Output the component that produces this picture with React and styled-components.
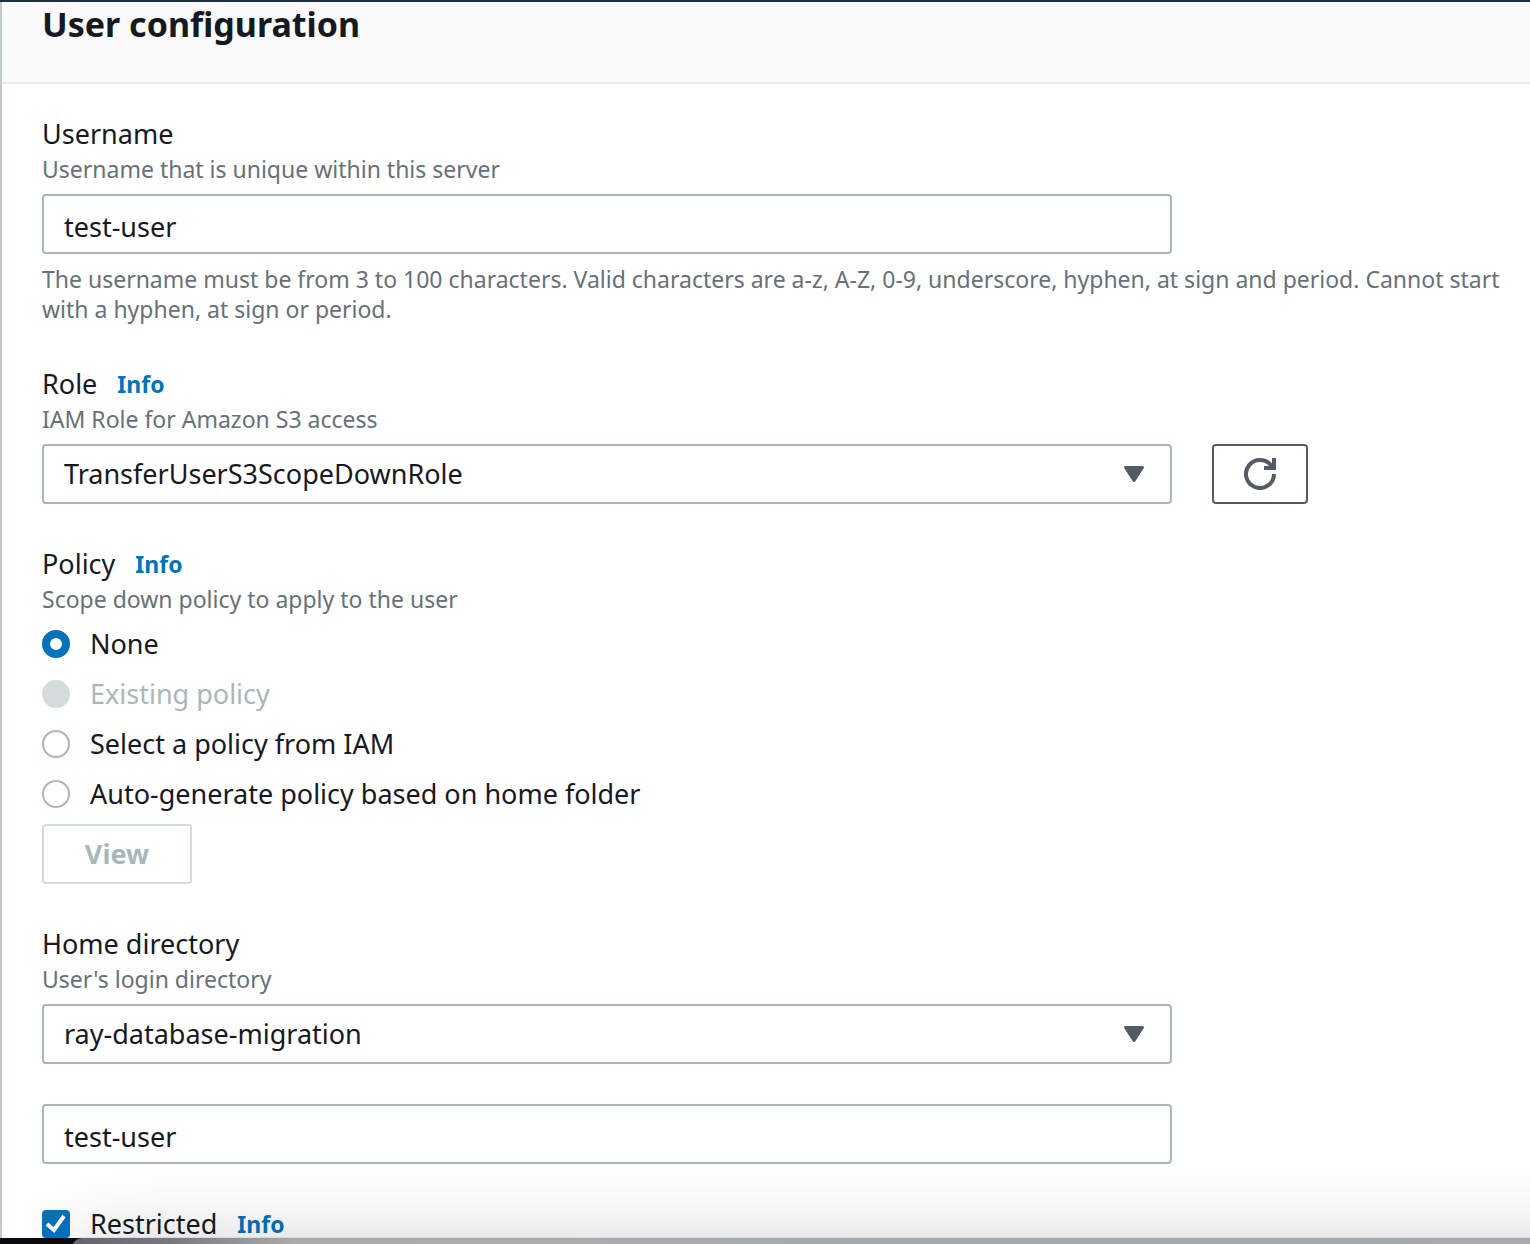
import React, { useState } from "react";
import styled, { createGlobalStyle } from "styled-components";

const color = {
  text: "#16191f",
  muted: "#687078",
  link: "#0073bb",
  border: "#aab7b8",
  disabled: "#d5dbdb",
  icon: "#545b64",
};

const GlobalStyle = createGlobalStyle`
  *, *::before, *::after { box-sizing: border-box; }
  body {
    margin: 0;
    background: #fff;
    color: ${color.text};
    font-family: "Noto Sans", "Open Sans", sans-serif;
    font-size: 27px;
    line-height: 40px;
  }
`;

const Panel = styled.main`
  border-top: 2px solid #232f3e;
`;

const PanelInner = styled.div`
  border-left: 2px solid #c3c9c9;
`;

const Header = styled.header`
  padding: 0 40px 36px;
  background: #fafafa;
  border-bottom: 2px solid #eaeded;
`;

const Title = styled.h2`
  margin: 0;
  font-size: 34px;
  line-height: 44px;
  font-weight: 700;
`;

const Form = styled.form`
  display: flex;
  flex-direction: column;
  gap: 40px;
  padding: 30px 16px 0 40px;
`;

const Field = styled.div`
  display: flex;
  flex-direction: column;
  gap: 10px;
`;

const FieldSet = styled.fieldset`
  display: flex;
  flex-direction: column;
  gap: 10px;
  min-width: 0;
  margin: 0;
  padding: 0;
  border: 0;
`;

const LabelRow = styled.div`
  display: flex;
  align-items: center;
  gap: 20px;
`;

const Hint = styled.div`
  color: ${color.muted};
  font-size: 23px;
  line-height: 30px;
`;

const InfoLink = styled.a`
  color: ${color.link};
  font-size: 23px;
  font-weight: 700;
  text-decoration: none;
`;

const ControlRow = styled.div`
  display: grid;
  grid-template-columns: minmax(0, 1130px) auto;
  justify-content: start;
  gap: 40px;
`;

const TextInput = styled.input`
  width: 100%;
  max-width: 1130px;
  height: 60px;
  padding: 4px 20px 0;
  border: 2px solid ${color.border};
  border-radius: 4px;
  background: #fff;
  color: inherit;
  font: inherit;
`;

const SelectBox = styled.div`
  display: grid;
  align-items: center;
  max-width: 1130px;

  > * {
    grid-area: 1 / 1;
  }

  > svg {
    justify-self: end;
    margin-right: 28px;
    pointer-events: none;
  }
`;

const NativeSelect = styled.select`
  appearance: none;
  width: 100%;
  height: 60px;
  padding: 0 60px 0 20px;
  border: 2px solid ${color.border};
  border-radius: 4px;
  background: #fff;
  color: inherit;
  font: inherit;
`;

const Button = styled.button`
  display: inline-flex;
  align-items: center;
  justify-content: center;
  align-self: flex-start;
  height: 60px;
  min-width: ${(p) => (p.$icon ? "96px" : "150px")};
  padding: 0;
  border: 2px solid ${color.icon};
  border-radius: 4px;
  background: #fff;
  color: ${color.icon};
  font: inherit;
  font-weight: 700;

  &:disabled {
    border-color: ${color.disabled};
    color: ${color.border};
  }
`;

const Choice = styled.label`
  display: flex;
  align-items: center;
  gap: 20px;
  color: ${(p) => (p.$disabled ? color.border : "inherit")};
`;

const Radio = styled.input`
  appearance: none;
  flex: none;
  width: 28px;
  height: 28px;
  margin: 0;
  border: 2px solid ${color.border};
  border-radius: 50%;
  background: #fff;

  &:checked {
    border: 8px solid ${color.link};
  }

  &:disabled {
    border-color: ${color.disabled};
    background: ${color.disabled};
  }
`;

const CheckWrap = styled.span`
  display: grid;
  flex: none;

  > * {
    grid-area: 1 / 1;
  }

  > svg {
    pointer-events: none;
  }
`;

const Checkbox = styled.input`
  appearance: none;
  width: 28px;
  height: 28px;
  margin: 0;
  border: 2px solid ${color.border};
  border-radius: 4px;
  background: #fff;

  &:checked {
    border-color: ${color.link};
    background: ${color.link};
  }
`;

const DesktopEdge = styled.div`
  position: fixed;
  inset: auto 0 0 0;
  height: 100px;
  overflow: hidden;
  pointer-events: none;

  &::before {
    content: "";
    position: absolute;
    inset: auto 0 0 0;
    height: 6px;
    background: #0b0b0d;
  }

  &::after {
    content: "";
    position: absolute;
    top: 94px;
    left: 72px;
    right: -100px;
    height: 200px;
    border-top-left-radius: 10px;
    background: linear-gradient(90deg, #62656f 0, #77797f 100px, #a9a9a9 220px, #a9abab 480px, #a3a9ac 800px, #a3a9ac 1300px, #a9a9ab 1400px);
    box-shadow: 0 0 2px rgba(0, 0, 0, 0.25), 0 0 80px rgba(0, 0, 0, 0.17);
  }
`;

function Caret() {
  return (
    <svg width="20" height="16" viewBox="0 0 20 16" aria-hidden="true">
      <path d="M1.5 1.5h17L10 14.5z" fill={color.icon} stroke={color.icon} strokeWidth="3" strokeLinejoin="round" />
    </svg>
  );
}

function RefreshIcon() {
  return (
    <svg width="32" height="32" viewBox="0 0 32 32" fill="none" stroke="currentColor" strokeWidth="4" aria-hidden="true">
      <path d="M30 16A14 14 0 1 1 28 8.8" />
      <path d="M30 0v10H20" />
    </svg>
  );
}

function CheckMark() {
  return (
    <svg width="28" height="28" viewBox="0 0 28 28" fill="none" stroke="#fff" strokeWidth="4" aria-hidden="true">
      <path d="M5 14l7 6L22 6" />
    </svg>
  );
}

function Select({ id, value }) {
  return (
    <SelectBox>
      <NativeSelect id={id} defaultValue={value}>
        <option>{value}</option>
      </NativeSelect>
      <Caret />
    </SelectBox>
  );
}

function FieldLabel({ htmlFor, text, hint, info }) {
  return (
    <div>
      <LabelRow>
        {htmlFor ? <label htmlFor={htmlFor}>{text}</label> : <span id="policy-label">{text}</span>}
        {info && <InfoLink href="#info">Info</InfoLink>}
      </LabelRow>
      <Hint>{hint}</Hint>
    </div>
  );
}

const policies = [
  { value: "none", label: "None" },
  { value: "existing", label: "Existing policy", disabled: true },
  { value: "iam", label: "Select a policy from IAM" },
  { value: "auto", label: "Auto-generate policy based on home folder" },
];

export default function App() {
  const [policy, setPolicy] = useState("none");
  const [restricted, setRestricted] = useState(true);

  return (
    <>
      <GlobalStyle />
      <Panel>
        <PanelInner>
          <Header>
            <Title>User configuration</Title>
          </Header>
          <Form>
            <Field>
              <FieldLabel htmlFor="username" text="Username" hint="Username that is unique within this server" />
              <TextInput id="username" type="text" defaultValue="test-user" />
              <Hint>
                The username must be from 3 to 100 characters. Valid characters are a-z, A-Z, 0-9, underscore, hyphen, at
                sign and period. Cannot start with a hyphen, at sign or period.
              </Hint>
            </Field>

            <Field>
              <FieldLabel htmlFor="role" text="Role" hint="IAM Role for Amazon S3 access" info />
              <ControlRow>
                <Select id="role" value="TransferUserS3ScopeDownRole" />
                <Button type="button" $icon aria-label="Refresh roles">
                  <RefreshIcon />
                </Button>
              </ControlRow>
            </Field>

            <FieldSet aria-labelledby="policy-label">
              <FieldLabel text="Policy" hint="Scope down policy to apply to the user" info />
              {policies.map((p) => (
                <Choice key={p.value} $disabled={p.disabled}>
                  <Radio
                    type="radio"
                    name="policy"
                    value={p.value}
                    disabled={p.disabled}
                    checked={policy === p.value}
                    onChange={() => setPolicy(p.value)}
                  />
                  {p.label}
                </Choice>
              ))}
              <Button type="button" disabled>
                View
              </Button>
            </FieldSet>

            <Field>
              <FieldLabel htmlFor="home" text="Home directory" hint="User's login directory" />
              <Select id="home" value="ray-database-migration" />
            </Field>

            <TextInput type="text" aria-label="Home directory folder" defaultValue="test-user" />

            <LabelRow>
              <Choice>
                <CheckWrap>
                  <Checkbox type="checkbox" checked={restricted} onChange={(e) => setRestricted(e.target.checked)} />
                  {restricted && <CheckMark />}
                </CheckWrap>
                Restricted
              </Choice>
              <InfoLink href="#info">Info</InfoLink>
            </LabelRow>
          </Form>
        </PanelInner>
      </Panel>
      <DesktopEdge />
    </>
  );
}
